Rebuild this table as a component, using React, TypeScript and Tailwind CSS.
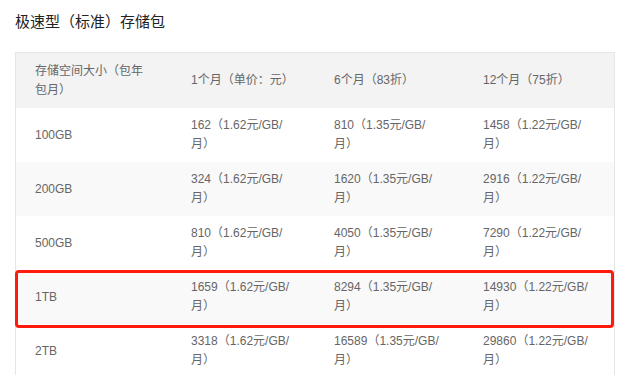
import React from "react";

const rows = [
  ["100GB", "162", "810", "1458"],
  ["200GB", "324", "1620", "2916"],
  ["500GB", "810", "4050", "7290"],
  ["1TB", "1659", "8294", "14930"],
  ["2TB", "3318", "16589", "29860"],
];
const unit = ["", "1.62", "1.35", "1.22"];

const cellPad = ["pl-[19px]", "pl-[20px]", "pl-[20px]", "pl-[20px]"];

export default function App() {
  return (
    <div
      className="relative w-[626px] h-[375px] overflow-hidden bg-white px-[15px] pt-[11px]"
      style={{ fontFamily: '"Liberation Sans", "Noto Sans CJK SC", sans-serif' }}
    >
      <div className="h-[22px] leading-[22px] text-[15px] text-[#222]">极速型（标准）存储包</div>
      <div className="mt-[19px] w-[600px] border-l border-t border-r border-[#e6e6e6] text-[12px] text-[#666] leading-[19px] whitespace-nowrap">
        <div className="grid grid-cols-[155px_143px_149px_151px] h-[55px] bg-[#f3f3f3] items-center">
          <div className={cellPad[0]}>
            存储空间大小（包年
            <br />
            包月）
          </div>
          <div className={cellPad[1]}>1个月（单价：元）</div>
          <div className={cellPad[2]}>6个月（83折）</div>
          <div className={cellPad[3]}>12个月（75折）</div>
        </div>
        {rows.map((r, i) => (
          <div
            key={i}
            className={`grid grid-cols-[155px_143px_149px_151px] h-[54px] items-center ${i % 2 === 1 ? "bg-[#f9f9f9]" : "bg-white"}`}
          >
            <div className={cellPad[0]}>{r[0]}</div>
            {[1, 2, 3].map((j) => (
              <div key={j} className={cellPad[j]}>
                {r[j]}（{unit[j]}元/GB/
                <br />
                月）
              </div>
            ))}
          </div>
        ))}
      </div>
      <div className="absolute left-[15px] top-[270px] w-[599px] h-[58px] border-[3px] border-[#ff1a0d] rounded-[4px]" />
    </div>
  );
}
